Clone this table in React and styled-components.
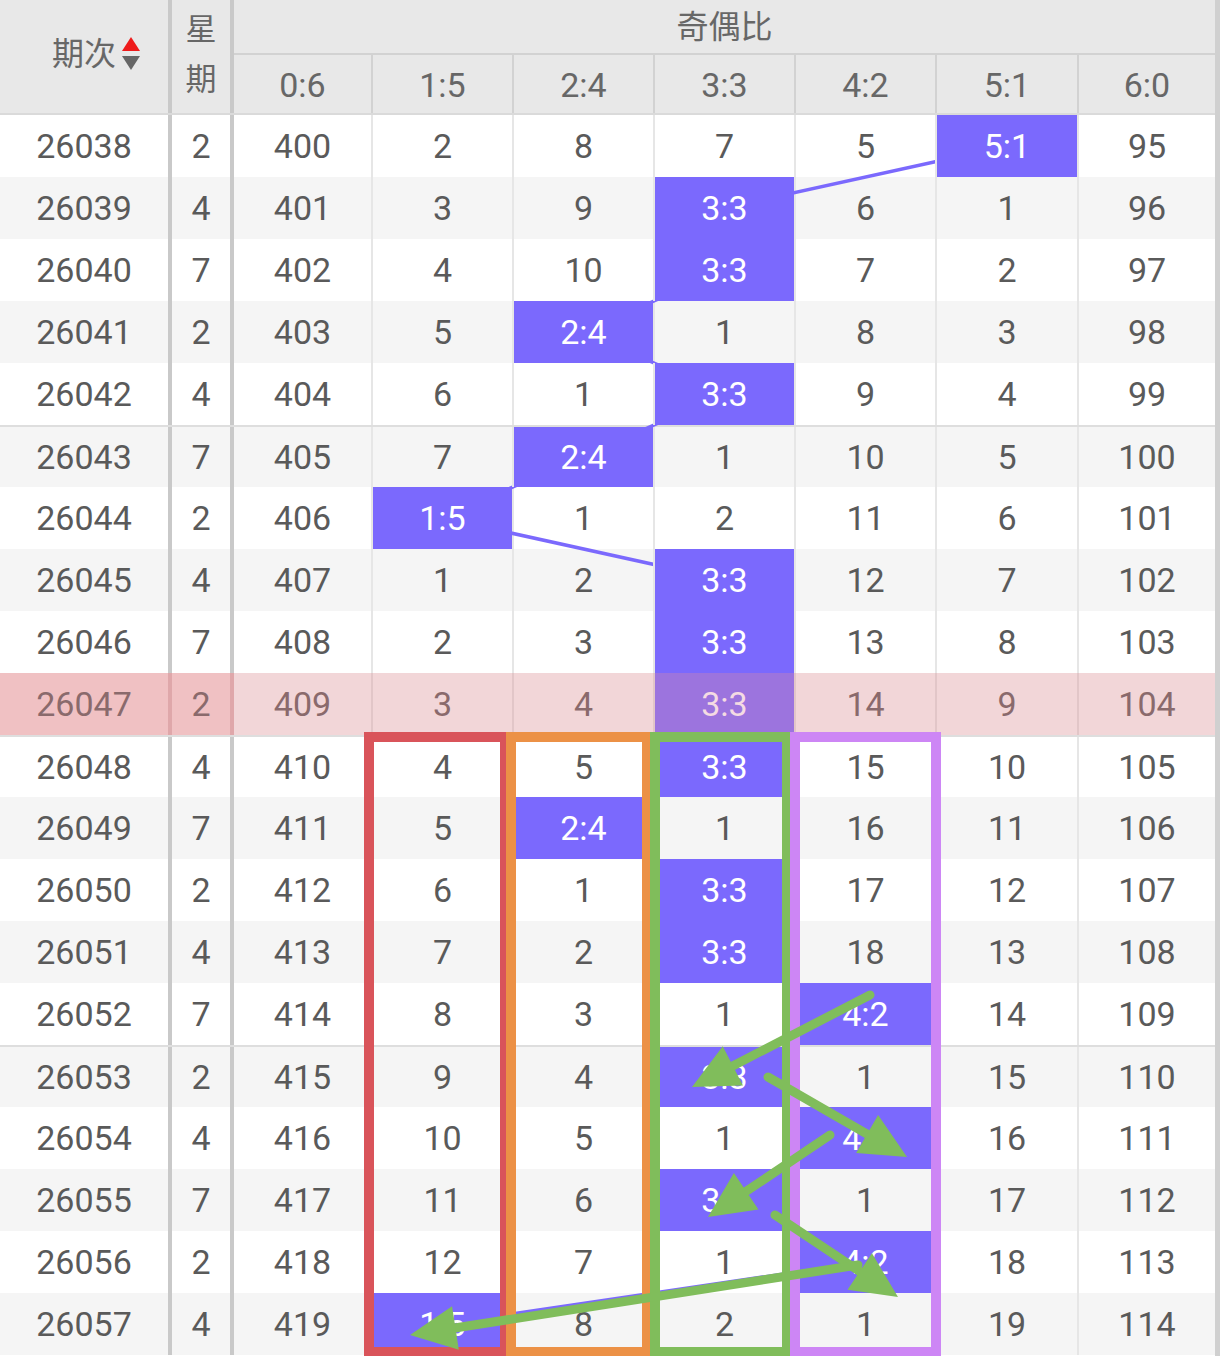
import React from 'react';
import styled, { createGlobalStyle, css } from 'styled-components';

const GlobalStyle = createGlobalStyle`
  html, body { margin: 0; padding: 0; background: #fff; }
  body { font-family: Roboto, "Noto Sans CJK SC", "Noto Sans", sans-serif; }
  *, *::before, *::after { box-sizing: border-box; }
`;

const COLS = '172px 62px 137px 141px 141px 141px 141px 142px 138px';
const RATIOS = ['0:6', '1:5', '2:4', '3:3', '4:2', '5:1', '6:0'];
const COL_LEFT = [234, 371, 512, 653, 794, 935, 1077];
const COL_W = [137, 141, 141, 141, 141, 142, 138];
const ROW_H = 62;
const PURPLE = '#7b69fd';
const GREEN = '#80bd5b';

const ROWS = [
  [26038, 2, [400, 2, 8, 7, 5, 0, 95], 5],
  [26039, 4, [401, 3, 9, 0, 6, 1, 96], 3],
  [26040, 7, [402, 4, 10, 0, 7, 2, 97], 3],
  [26041, 2, [403, 5, 0, 1, 8, 3, 98], 2],
  [26042, 4, [404, 6, 1, 0, 9, 4, 99], 3],
  [26043, 7, [405, 7, 0, 1, 10, 5, 100], 2],
  [26044, 2, [406, 0, 1, 2, 11, 6, 101], 1],
  [26045, 4, [407, 1, 2, 0, 12, 7, 102], 3],
  [26046, 7, [408, 2, 3, 0, 13, 8, 103], 3],
  [26047, 2, [409, 3, 4, 0, 14, 9, 104], 3],
  [26048, 4, [410, 4, 5, 0, 15, 10, 105], 3],
  [26049, 7, [411, 5, 0, 1, 16, 11, 106], 2],
  [26050, 2, [412, 6, 1, 0, 17, 12, 107], 3],
  [26051, 4, [413, 7, 2, 0, 18, 13, 108], 3],
  [26052, 7, [414, 8, 3, 1, 0, 14, 109], 4],
  [26053, 2, [415, 9, 4, 0, 1, 15, 110], 3],
  [26054, 4, [416, 10, 5, 1, 0, 16, 111], 4],
  [26055, 7, [417, 11, 6, 0, 1, 17, 112], 3],
  [26056, 2, [418, 12, 7, 1, 0, 18, 113], 4],
  [26057, 4, [419, 0, 8, 2, 1, 19, 114], 1],
];
const HL_INDEX = 9;

const FRAMES = [
  { color: '#d9545a', left: 364, width: 146 },
  { color: '#ec9146', left: 506, width: 146 },
  { color: GREEN, left: 650, width: 142 },
  { color: '#cd86f5', left: 790, width: 151 },
];

const ARROWS = [
  [870, 880, 692, 972],
  [768, 962, 907, 1042],
  [830, 1020, 708, 1102],
  [775, 1100, 898, 1182],
  [858, 1150, 410, 1220],
];

const Page = styled.div`
  position: relative;
  width: 1220px;
  height: 1356px;
  overflow: hidden;
  border-right: 5px solid #d0d0d0;
  color: #5a5a5a;
`;

const Header = styled.div`
  display: grid;
  grid-template-columns: ${COLS};
  grid-template-rows: 55px 58px;
  height: 115px;
  background: #e8e8e8;
  border-bottom: 2px solid #dadada;
  color: #676767;
  font-size: 34px;
`;

const HeadCell = styled.div`
  display: flex;
  align-items: center;
  justify-content: center;
  line-height: 1;
`;

const IdHead = styled(HeadCell)`
  grid-row: 1 / span 2;
  border-right: 4px solid #c9c9c9;
  font-size: 32px;
  padding-bottom: 6px;
`;

const WeekHead = styled(HeadCell)`
  grid-row: 1 / span 2;
  border-right: 4px solid #c9c9c9;
  font-size: 31px;
  line-height: 50px;
  text-align: center;
  padding-bottom: 4px;
`;

const WeekText = styled.span`
  width: 1.1em;
  word-break: break-all;
`;

const GroupHead = styled(HeadCell)`
  grid-column: 3 / span 7;
  border-bottom: 2px solid #d2d2d2;
  font-size: 32px;
`;

const SubHead = styled(HeadCell)`
  border-left: ${(p) => (p.$first ? 'none' : '2px solid #d2d2d2')};
  padding-top: 2px;
`;

const SortWrap = styled.span`
  position: relative;
  display: inline-block;
`;

const SortIcon = styled.svg`
  position: absolute;
  left: calc(100% + 6px);
  top: 50%;
  transform: translateY(-50%);
`;

const Body = styled.div`
  position: relative;
`;

const Row = styled.div`
  display: grid;
  grid-template-columns: ${COLS};
  height: ${ROW_H}px;
  background: ${(p) => (p.$alt ? '#f5f5f5' : '#ffffff')};
  border-top: ${(p) => (p.$sep ? '2px solid #dedede' : 'none')};
  font-size: 34px;
  ${(p) =>
    p.$hl &&
    css`
      background: #f2d6d8;
      color: #8a6a6c;
    `}
`;

const Cell = styled.div`
  display: flex;
  align-items: center;
  justify-content: center;
  line-height: 1;
`;

const IdCell = styled(Cell)`
  border-right: 4px solid ${(p) => (p.$hl ? '#dfa7aa' : '#c9c9c9')};
  background: ${(p) => (p.$hl ? '#f0c1c3' : 'transparent')};
`;

const WeekCell = styled(IdCell)``;

const ValCell = styled(Cell)`
  border-left: ${(p) => (p.$first ? 'none' : `2px solid ${p.$hl ? '#e2c6c8' : '#e6e6e6'}`)};
  ${(p) =>
    p.$hit &&
    css`
      position: relative;
      z-index: 2;
      background: ${p.$hl ? '#9c74de' : PURPLE};
      background-clip: padding-box;
      color: ${p.$hl ? '#f4dbe3' : '#ffffff'};
    `}
`;

const Layer = styled.svg`
  position: absolute;
  left: 0;
  top: 0;
  pointer-events: none;
  z-index: ${(p) => p.$z};
`;

const Frame = styled.div`
  position: absolute;
  top: 617px;
  height: 625px;
  border: 10px solid ${(p) => p.$color};
  z-index: 3;
  pointer-events: none;
`;

const cx = (k) => COL_LEFT[k] + COL_W[k] / 2 + 1;
const cy = (i) => i * ROW_H + ROW_H / 2;

function Arrow({ x1, y1, x2, y2 }) {
  const dx = x2 - x1;
  const dy = y2 - y1;
  const len = Math.hypot(dx, dy);
  const ux = dx / len;
  const uy = dy / len;
  const L = 46;
  const W = 44;
  const bx = x2 - ux * L;
  const by = y2 - uy * L;
  const px = -uy;
  const py = ux;
  const pts = `${x2},${y2} ${bx + (px * W) / 2},${by + (py * W) / 2} ${bx - (px * W) / 2},${by - (py * W) / 2}`;
  return (
    <g>
      <line x1={x1} y1={y1} x2={bx + ux * 4} y2={by + uy * 4} stroke={GREEN} strokeWidth="9" strokeLinecap="round" />
      <polygon points={pts} fill={GREEN} />
    </g>
  );
}

export default function App() {
  const links = [];
  for (let i = 1; i < ROWS.length; i++) {
    const a = ROWS[i - 1][3];
    const b = ROWS[i][3];
    if (a !== b) links.push([cx(a), cy(i - 1), cx(b), cy(i)]);
  }
  const bodyH = ROWS.length * ROW_H;

  return (
    <>
      <GlobalStyle />
      <Page>
        <Header>
          <IdHead>
            <SortWrap>
              期次
              <SortIcon width="18" height="34" viewBox="0 0 18 34">
                <polygon points="9,0 18,14 0,14" fill="#ee1b1b" />
                <polygon points="0,19 18,19 9,33" fill="#666666" />
              </SortIcon>
            </SortWrap>
          </IdHead>
          <WeekHead>
            <WeekText>星期</WeekText>
          </WeekHead>
          <GroupHead>奇偶比</GroupHead>
          {RATIOS.map((r, k) => (
            <SubHead key={r} $first={k === 0}>
              {r}
            </SubHead>
          ))}
        </Header>
        <Body>
          <Layer $z={1} width="1220" height={bodyH} viewBox={`0 0 1220 ${bodyH}`}>
            {links.map(([x1, y1, x2, y2], n) => (
              <line key={n} x1={x1} y1={y1} x2={x2} y2={y2} stroke={PURPLE} strokeWidth="3.5" />
            ))}
          </Layer>
          {ROWS.map(([id, wk, vals, hit], i) => {
            const hl = i === HL_INDEX;
            return (
              <Row key={id} $alt={i % 2 === 1} $sep={i > 0 && i % 5 === 0} $hl={hl}>
                <IdCell $hl={hl}>{id}</IdCell>
                <WeekCell $hl={hl}>{wk}</WeekCell>
                {vals.map((v, k) => (
                  <ValCell key={k} $first={k === 0} $hit={k === hit} $hl={hl}>
                    {k === hit ? RATIOS[k] : v}
                  </ValCell>
                ))}
              </Row>
            );
          })}
          {FRAMES.map((f) => (
            <Frame key={f.color} $color={f.color} style={{ left: f.left, width: f.width }} />
          ))}
          <Layer $z={4} width="1220" height={bodyH} viewBox={`0 0 1220 ${bodyH}`}>
            {ARROWS.map(([x1, y1, x2, y2], n) => (
              <Arrow key={n} x1={x1} y1={y1} x2={x2} y2={y2} />
            ))}
          </Layer>
        </Body>
      </Page>
    </>
  );
}
